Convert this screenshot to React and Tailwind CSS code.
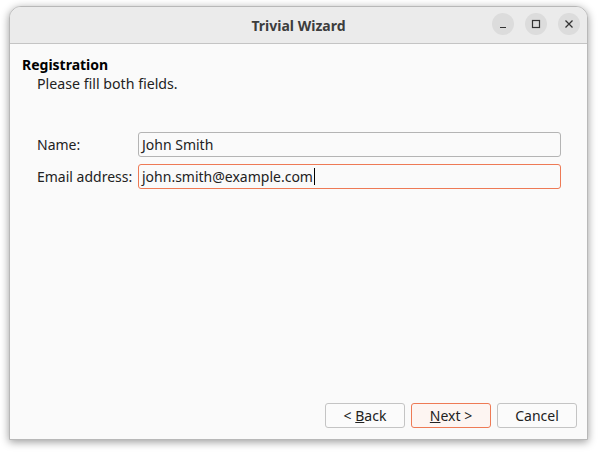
import React from 'react'

const App = () => {
    return (
        <main className="w-[598px] h-[453px] bg-white pt-[6px] pl-[9px] font-['Noto_Sans',sans-serif] text-[#222]">
            <div className="w-[579px] h-[434px] flex flex-col rounded-t-[12px] border border-[#b8b8b8] bg-[#fafafa] shadow-[0_2px_8px_rgba(0,0,0,0.4)] overflow-hidden">
                <div className="h-[37px] shrink-0 flex items-center relative bg-[#ebebeb] border-b border-[#c4c4c4]">
                    <div className="w-full text-center text-[14px] font-bold text-[#3d3d3d]">Trivial Wizard</div>
                    <div className="absolute right-[7px] top-[6px] flex gap-[11px]">
                        <div className="w-[22px] h-[22px] rounded-full bg-[#dcdcdc] flex items-center justify-center">
                            <svg width="10" height="10" viewBox="0 0 10 10"><path d="M2 8.5h6" stroke="#333" strokeWidth="1.2" /></svg>
                        </div>
                        <div className="w-[22px] h-[22px] rounded-full bg-[#dcdcdc] flex items-center justify-center">
                            <svg width="10" height="10" viewBox="0 0 10 10"><rect x="1.5" y="1.5" width="7" height="7" fill="none" stroke="#333" strokeWidth="1.2" /></svg>
                        </div>
                        <div className="w-[22px] h-[22px] rounded-full bg-[#dcdcdc] flex items-center justify-center">
                            <svg width="10" height="10" viewBox="0 0 10 10"><path d="M1.5 1.5l7 7M8.5 1.5l-7 7" stroke="#333" strokeWidth="1.3" /></svg>
                        </div>
                    </div>
                </div>

                <div className="flex-1 flex flex-col pl-[12px] pr-[10px] pt-[11px] pb-[11px]">
                    <div className="text-[14px] font-bold leading-[19px] text-black">Registration</div>
                    <div className="pl-[15px] text-[14.2px] leading-[19px]">Please fill both fields.</div>

                    <div className="mt-[39px] pl-[15px] pr-[16px] flex flex-col gap-[7px]">
                        <div className="flex items-center">
                            <label className="w-[101px] text-[14px]">Name:</label>
                            <div className="flex-1 h-[25px] border border-[#b4b4b4] rounded-[3px] bg-[#fafafa] px-[3px] flex items-center text-[14px]">John Smith</div>
                        </div>
                        <div className="flex items-center">
                            <label className="w-[101px] text-[14px]">Email address:</label>
                            <div className="flex-1 h-[25px] border border-[#ee7a55] rounded-[3px] bg-[#fafafa] px-[3px] flex items-center text-[14px]">
                                john.smith@example.com<span className="w-px h-[17px] bg-black ml-px" />
                            </div>
                        </div>
                    </div>

                    <div className="mt-auto flex justify-end gap-[6px]">
                        <button className="w-[80px] h-[25px] border border-[#c4c4c4] rounded-[3px] bg-[#fbfbfb] text-[14px]">&lt; <span className="underline">B</span>ack</button>
                        <button className="w-[80px] h-[25px] border border-[#ee7a55] rounded-[3px] bg-[#fdf5f2] text-[14px]"><span className="underline">N</span>ext &gt;</button>
                        <button className="w-[80px] h-[25px] border border-[#c4c4c4] rounded-[3px] bg-[#fbfbfb] text-[14px]">Cancel</button>
                    </div>
                </div>
            </div>
        </main>
    )
}

export default App
